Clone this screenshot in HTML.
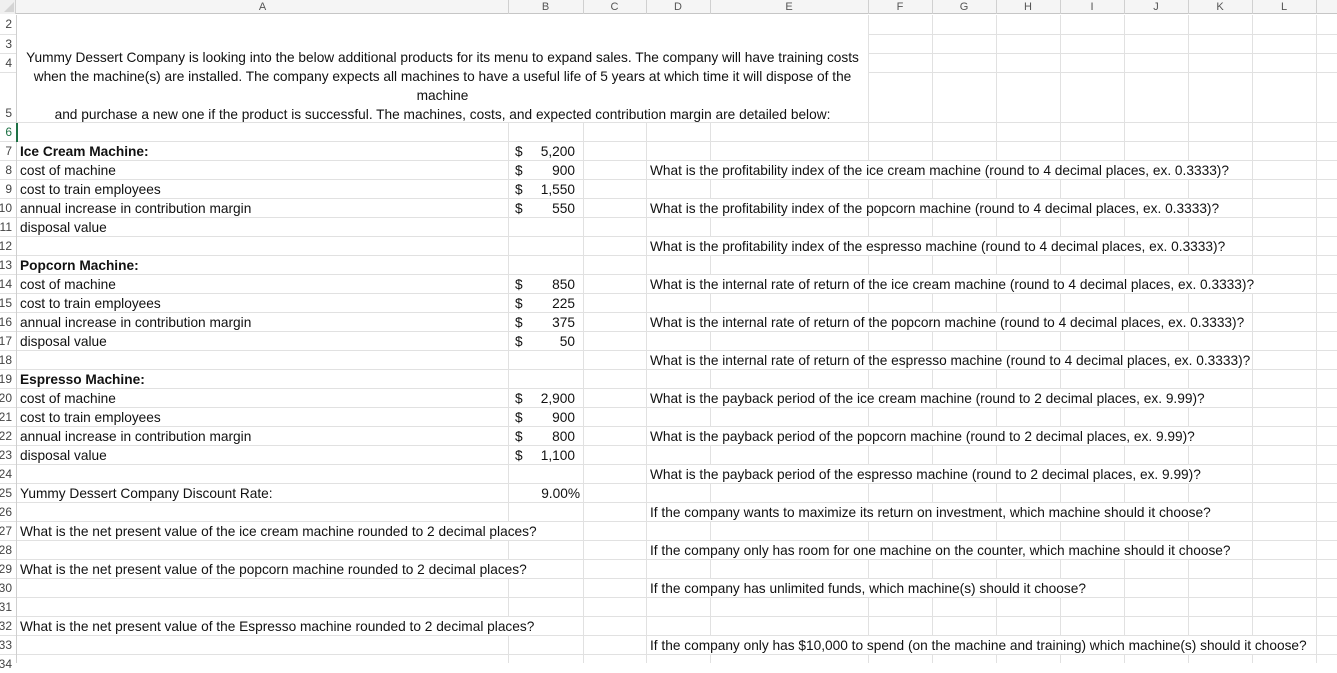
<!DOCTYPE html>
<html><head><meta charset="utf-8"><style>
*{margin:0;padding:0;box-sizing:border-box}
body{width:1337px;height:663px;overflow:hidden;background:#fff;position:relative;font-family:"Liberation Sans",sans-serif;font-size:13.7px;color:#111}
.a{position:absolute}
.h{position:absolute;height:1px;background:#e1e1e1}
.v{position:absolute;width:1px;background:#e1e1e1}
.t{position:absolute;height:18px;line-height:19px;background:#fff;white-space:nowrap;padding-left:3px;overflow:visible}
.n{position:absolute;left:0;width:12px;height:18px;line-height:19px;direction:rtl;text-align:right;font-size:12px;color:#444;overflow:hidden;white-space:nowrap}
.cl{position:absolute;top:0;height:14px;line-height:14px;font-size:11px;color:#555;text-align:center}
.b{font-weight:bold}
.d{position:absolute;left:515px;height:18px;line-height:19px}
.m{position:absolute;left:525px;width:50px;text-align:right;height:18px;line-height:19px}
</style></head><body>
<div class="a" style="left:0;top:0;width:1337px;height:14px;background:#f5f5f5;border-bottom:1px solid #c6c6c6"></div>
<div class="a" style="left:0;top:0;width:16px;height:14px;background:#f0f0f0;border-right:1px solid #d0d0d0"></div>
<svg class="a" style="left:3px;top:2px" width="12" height="11"><polygon points="11,0 11,10 1,10" fill="#d4d4d4"/></svg>
<div class="cl" style="left:17px;width:491px">A</div>
<div class="cl" style="left:508px;width:75px">B</div>
<div class="cl" style="left:583px;width:63px">C</div>
<div class="cl" style="left:646px;width:64px">D</div>
<div class="cl" style="left:710px;width:158px">E</div>
<div class="cl" style="left:868px;width:64px">F</div>
<div class="cl" style="left:932px;width:64px">G</div>
<div class="cl" style="left:996px;width:64px">H</div>
<div class="cl" style="left:1060px;width:64px">I</div>
<div class="cl" style="left:1124px;width:64px">J</div>
<div class="cl" style="left:1188px;width:64px">K</div>
<div class="cl" style="left:1252px;width:64px">L</div>
<div class="v" style="left:508px;top:0;height:14px;background:#d0d0d0"></div>
<div class="v" style="left:583px;top:0;height:14px;background:#d0d0d0"></div>
<div class="v" style="left:646px;top:0;height:14px;background:#d0d0d0"></div>
<div class="v" style="left:710px;top:0;height:14px;background:#d0d0d0"></div>
<div class="v" style="left:868px;top:0;height:14px;background:#d0d0d0"></div>
<div class="v" style="left:932px;top:0;height:14px;background:#d0d0d0"></div>
<div class="v" style="left:996px;top:0;height:14px;background:#d0d0d0"></div>
<div class="v" style="left:1060px;top:0;height:14px;background:#d0d0d0"></div>
<div class="v" style="left:1124px;top:0;height:14px;background:#d0d0d0"></div>
<div class="v" style="left:1188px;top:0;height:14px;background:#d0d0d0"></div>
<div class="v" style="left:1252px;top:0;height:14px;background:#d0d0d0"></div>
<div class="v" style="left:1316px;top:0;height:14px;background:#d0d0d0"></div>

<div class="a" style="left:0;top:123px;width:1337px;height:540px;background:repeating-linear-gradient(to bottom,transparent 0,transparent 18px,#e1e1e1 18px,#e1e1e1 19px)"></div>
<div class="h" style="left:868px;top:34px;width:469px"></div>
<div class="h" style="left:868px;top:53px;width:469px"></div>
<div class="h" style="left:868px;top:72px;width:469px"></div>
<div class="h" style="left:0;top:122px;width:1337px"></div>
<div class="h" style="left:0;top:34px;width:16px"></div>
<div class="h" style="left:0;top:53px;width:16px"></div>
<div class="h" style="left:0;top:72px;width:16px"></div>
<div class="v" style="left:16px;top:15px;height:648px;background:#cfcfcf"></div>
<div class="v" style="left:508px;top:123px;height:540px"></div>
<div class="v" style="left:583px;top:123px;height:540px"></div>
<div class="v" style="left:646px;top:123px;height:540px"></div>
<div class="v" style="left:710px;top:123px;height:540px"></div>
<div class="v" style="left:868px;top:15px;height:648px"></div>
<div class="v" style="left:932px;top:15px;height:648px"></div>
<div class="v" style="left:996px;top:15px;height:648px"></div>
<div class="v" style="left:1060px;top:15px;height:648px"></div>
<div class="v" style="left:1124px;top:15px;height:648px"></div>
<div class="v" style="left:1188px;top:15px;height:648px"></div>
<div class="v" style="left:1252px;top:15px;height:648px"></div>
<div class="v" style="left:1316px;top:15px;height:648px"></div>
<div class="a" style="left:16px;top:123px;width:2px;height:19px;background:#1e7145"></div>

<div class="n" style="top:15px">2</div>
<div class="n" style="top:35px">3</div>
<div class="n" style="top:54px">4</div>
<div class="n" style="top:104px">5</div>
<div class="n" style="top:123px;color:#1e7145">6</div>
<div class="n" style="top:142px">7</div><div class="n" style="top:161px">8</div><div class="n" style="top:180px">9</div>
<div class="n" style="top:199px">10</div><div class="n" style="top:218px">11</div><div class="n" style="top:237px">12</div>
<div class="n" style="top:256px">13</div><div class="n" style="top:275px">14</div><div class="n" style="top:294px">15</div>
<div class="n" style="top:313px">16</div><div class="n" style="top:332px">17</div><div class="n" style="top:351px">18</div>
<div class="n" style="top:370px">19</div><div class="n" style="top:389px">20</div><div class="n" style="top:408px">21</div>
<div class="n" style="top:427px">22</div><div class="n" style="top:446px">23</div><div class="n" style="top:465px">24</div>
<div class="n" style="top:484px">25</div><div class="n" style="top:503px">26</div><div class="n" style="top:522px">27</div>
<div class="n" style="top:541px">28</div><div class="n" style="top:560px">29</div><div class="n" style="top:579px">30</div>
<div class="n" style="top:598px">31</div><div class="n" style="top:617px">32</div><div class="n" style="top:636px">33</div>
<div class="n" style="top:655px">34</div>

<div class="a" style="left:17px;top:48px;width:851px;text-align:center;line-height:19px">
Yummy Dessert Company is looking into the below additional products for its menu to expand sales. The company will have training costs<br>
when the machine(s) are installed. The company expects all machines to have a useful life of 5 years at which time it will dispose of the<br>
machine<br>
and purchase a new one if the product is successful. The machines, costs, and expected contribution margin are detailed below:</div>

<div class="t b" style="left:17px;top:142px">Ice Cream Machine:</div>
<div class="t" style="left:17px;top:161px">cost of machine</div>
<div class="t" style="left:17px;top:180px">cost to train employees</div>
<div class="t" style="left:17px;top:199px">annual increase in contribution margin</div>
<div class="t" style="left:17px;top:218px">disposal value</div>
<div class="t b" style="left:17px;top:256px">Popcorn Machine:</div>
<div class="t" style="left:17px;top:275px">cost of machine</div>
<div class="t" style="left:17px;top:294px">cost to train employees</div>
<div class="t" style="left:17px;top:313px">annual increase in contribution margin</div>
<div class="t" style="left:17px;top:332px">disposal value</div>
<div class="t b" style="left:17px;top:370px">Espresso Machine:</div>
<div class="t" style="left:17px;top:389px">cost of machine</div>
<div class="t" style="left:17px;top:408px">cost to train employees</div>
<div class="t" style="left:17px;top:427px">annual increase in contribution margin</div>
<div class="t" style="left:17px;top:446px">disposal value</div>
<div class="t" style="left:17px;top:484px">Yummy Dessert Company Discount Rate:</div>
<div class="t" style="left:17px;top:522px;width:566px">What is the net present value of the ice cream machine rounded to 2 decimal places?</div>
<div class="t" style="left:17px;top:560px;width:566px">What is the net present value of the popcorn machine rounded to 2 decimal places?</div>
<div class="t" style="left:17px;top:617px;width:566px">What is the net present value of the Espresso machine rounded to 2 decimal places?</div>

<div class="d" style="top:142px">$</div><div class="m" style="top:142px">5,200</div>
<div class="d" style="top:161px">$</div><div class="m" style="top:161px">900</div>
<div class="d" style="top:180px">$</div><div class="m" style="top:180px">1,550</div>
<div class="d" style="top:199px">$</div><div class="m" style="top:199px">550</div>
<div class="d" style="top:275px">$</div><div class="m" style="top:275px">850</div>
<div class="d" style="top:294px">$</div><div class="m" style="top:294px">225</div>
<div class="d" style="top:313px">$</div><div class="m" style="top:313px">375</div>
<div class="d" style="top:332px">$</div><div class="m" style="top:332px">50</div>
<div class="d" style="top:389px">$</div><div class="m" style="top:389px">2,900</div>
<div class="d" style="top:408px">$</div><div class="m" style="top:408px">900</div>
<div class="d" style="top:427px">$</div><div class="m" style="top:427px">800</div>
<div class="d" style="top:446px">$</div><div class="m" style="top:446px">1,100</div>
<div class="m" style="top:484px;left:515px;width:65px">9.00%</div>

<div class="t" style="left:647px;top:161px;width:605px">What is the profitability index of the ice cream machine (round to 4 decimal places, ex. 0.3333)?</div>
<div class="t" style="left:647px;top:199px;width:605px">What is the profitability index of the popcorn machine (round to 4 decimal places, ex. 0.3333)?</div>
<div class="t" style="left:647px;top:237px;width:605px">What is the profitability index of the espresso machine (round to 4 decimal places, ex. 0.3333)?</div>
<div class="t" style="left:647px;top:275px;width:669px">What is the internal rate of return of the ice cream machine (round to 4 decimal places, ex. 0.3333)?</div>
<div class="t" style="left:647px;top:313px;width:605px">What is the internal rate of return of the popcorn machine (round to 4 decimal places, ex. 0.3333)?</div>
<div class="t" style="left:647px;top:351px;width:605px">What is the internal rate of return of the espresso machine (round to 4 decimal places, ex. 0.3333)?</div>
<div class="t" style="left:647px;top:389px;width:605px">What is the payback period of the ice cream machine (round to 2 decimal places, ex. 9.99)?</div>
<div class="t" style="left:647px;top:427px;width:605px">What is the payback period of the popcorn machine (round to 2 decimal places, ex. 9.99)?</div>
<div class="t" style="left:647px;top:465px;width:605px">What is the payback period of the espresso machine (round to 2 decimal places, ex. 9.99)?</div>
<div class="t" style="left:647px;top:503px;width:605px">If the company wants to maximize its return on investment, which machine should it choose?</div>
<div class="t" style="left:647px;top:541px;width:605px">If the company only has room for one machine on the counter, which machine should it choose?</div>
<div class="t" style="left:647px;top:579px;width:477px">If the company has unlimited funds, which machine(s) should it choose?</div>
<div class="t" style="left:647px;top:636px;width:669px">If the company only has $10,000 to spend (on the machine and training) which machine(s) should it choose?</div>
</body></html>
